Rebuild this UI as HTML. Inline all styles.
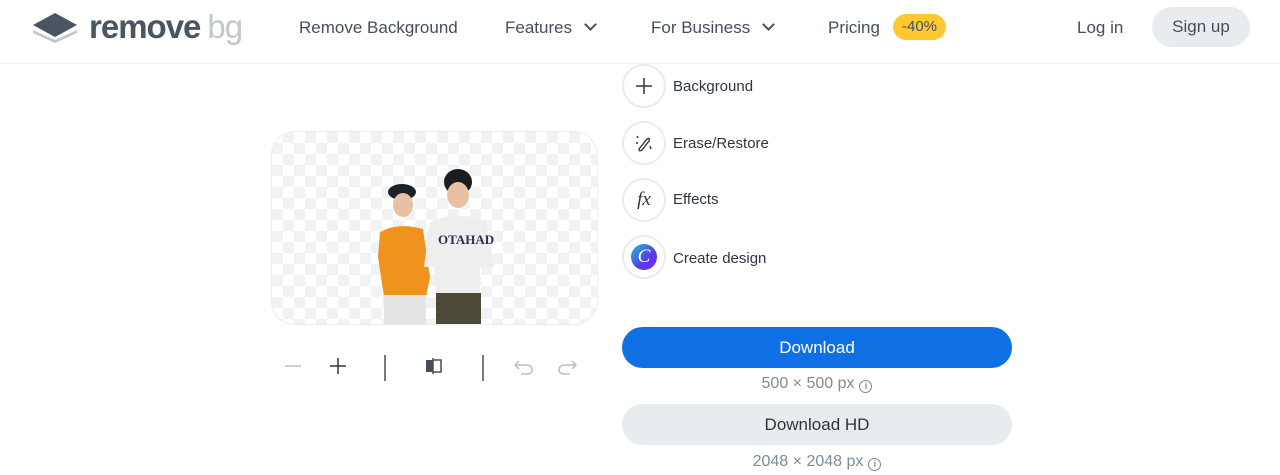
<!DOCTYPE html>
<html><head><meta charset="utf-8"><style>
*{box-sizing:border-box;margin:0;padding:0}
body{width:1280px;height:475px;overflow:hidden;background:#fff;font-family:"Liberation Sans",sans-serif;color:#454f5b;position:relative}
.nav{position:absolute;top:0;left:0;width:1280px;height:64px;border-bottom:1px solid #f0f1f3}
.t{position:absolute;font-size:17px;color:#454f5b;white-space:nowrap}
.chev{display:inline-block;width:9px;height:9px;border-right:2px solid #454f5b;border-bottom:2px solid #454f5b;transform:rotate(45deg);margin-left:14px;position:relative;top:-4px}
.badge{position:absolute;left:893px;top:14px;width:53px;height:26px;border-radius:13px;background:#ffc833;font-size:15px;color:#454f5b;text-align:center;line-height:26px}
.signup{position:absolute;left:1152px;top:7px;width:98px;height:40px;border-radius:20px;background:#e9ecef;font-size:17px;text-align:center;line-height:40px;color:#454f5b}
.img{position:absolute;left:271px;top:131px;width:327px;height:194px;border-radius:24px;border:1px solid #eceef0;overflow:hidden;
background-color:#fff;background-image:linear-gradient(45deg,#f1f2f4 25%,transparent 25%,transparent 75%,#f1f2f4 75%),linear-gradient(45deg,#f1f2f4 25%,transparent 25%,transparent 75%,#f1f2f4 75%);background-size:22px 22px;background-position:0 0,11px 11px}
.circ{position:absolute;left:622px;width:44px;height:44px;border-radius:50%;border:2px solid #e9ecef;display:flex;align-items:center;justify-content:center}
.lab{position:absolute;left:673px;font-size:15px;color:#2d3640}
.btn{position:absolute;left:622px;width:390px;height:41px;border-radius:21px;text-align:center;line-height:41px;font-size:17px}
.sub{position:absolute;width:390px;left:622px;text-align:center;font-size:16px;color:#7d8b99}
.i{display:inline-block;width:13px;height:13px;border:1.3px solid #7d8b99;border-radius:50%;font-size:9px;line-height:11px;text-align:center;vertical-align:-1px;margin-left:5px;font-weight:bold}
</style></head><body>
<div class="nav">
<svg style="position:absolute;left:32px;top:12px" width="46" height="32" viewBox="0 0 46 32"><path d="M1 18 L23 28 L45 18 L45 21 L23 31 L1 21Z" fill="#c2c7cc"/><path d="M23 1 L45 13 L23 25 L1 13Z" fill="#4a5562"/></svg>
<div class="t" style="left:89px;top:8px;font-size:33px;font-weight:bold;color:#4a5562;letter-spacing:-1px">remove<span style="color:#c2c7cc;font-weight:normal;margin-left:7px">bg</span></div>
<div class="t" style="left:299px;top:18px">Remove Background</div>
<div class="t" style="left:505px;top:18px">Features<span class="chev"></span></div>
<div class="t" style="left:651px;top:18px">For Business<span class="chev"></span></div>
<div class="t" style="left:828px;top:18px">Pricing</div>
<div class="badge">-40%</div>
<div class="t" style="left:1077px;top:18px">Log in</div>
<div class="signup">Sign up</div>
</div>
<div class="img">
<svg style="position:absolute;left:106px;top:35px" width="130" height="160" viewBox="0 0 130 160">
<ellipse cx="24" cy="25" rx="14" ry="8" fill="#1c2128"/><ellipse cx="25" cy="38" rx="10" ry="12" fill="#e8c1a4"/>
<path d="M2 65 Q20 55 45 62 L52 110 L48 130 L6 130 L0 90Z" fill="#f0921e"/><rect x="6" y="128" width="42" height="32" fill="#e3e4e4"/>
<ellipse cx="80" cy="15" rx="14" ry="13" fill="#1a1d22"/><ellipse cx="80" cy="28" rx="11" ry="13" fill="#e8c1a4"/>
<path d="M52 55 Q80 42 108 55 L116 100 L102 100 L102 128 L58 128 L56 100 L46 100Z" fill="#efeeee"/>
<text x="60" y="77" font-size="13" font-weight="bold" fill="#2a3050" font-family="Liberation Serif">OTAHAD</text>
<rect x="58" y="126" width="45" height="34" fill="#4e4a3a"/>
</svg>
</div>
<svg style="position:absolute;left:283px;top:355px" width="300" height="28">
<path d="M2 11 H18" stroke="#b8bfc6" stroke-width="1.5"/><path d="M47 11 H63 M55 3 V19" stroke="#2d3640" stroke-width="1.5"/>
<path d="M102 -5 V26" stroke="#454f5b" stroke-width="1.5"/><path d="M200 -5 V26" stroke="#454f5b" stroke-width="1.5"/>
<rect x="143" y="5" width="7" height="12" fill="#454f5b"/><path d="M150 5 H158 V17 H150 M150 3 V19" stroke="#454f5b" stroke-width="1.5" fill="none"/>
<path d="M236 6 L232 10 L236 14 M232 10 H243 Q249 10 249 15 Q249 19 243 19 H238" stroke="#b8bfc6" stroke-width="1.5" fill="none"/>
<path d="M289 6 L293 10 L289 14 M293 10 H282 Q276 10 276 15 Q276 19 282 19 H287" stroke="#b8bfc6" stroke-width="1.5" fill="none"/>
</svg>
<div class="circ" style="top:64px"><svg width="20" height="20"><path d="M10 2V18M2 10H18" stroke="#2d3640" stroke-width="1.5"/></svg></div>
<div class="lab" style="top:78px">Background</div>
<div class="circ" style="top:121px"><svg width="22" height="22"><path d="M6 17 L14 7 Q17 5 16 9 L9 18 Q6 20 6 17Z M4 4 L5 6 M3 11 H5 M17 14 L18 17" stroke="#2d3640" stroke-width="1.4" fill="none"/></svg></div>
<div class="lab" style="top:135px">Erase/Restore</div>
<div class="circ" style="top:178px"><span style="font-family:'Liberation Serif',serif;font-style:italic;font-size:19px;color:#2d3640">fx</span></div>
<div class="lab" style="top:191px">Effects</div>
<div class="circ" style="top:235px"><div style="width:26px;height:26px;border-radius:50%;background:linear-gradient(135deg,#19c3d4,#5a39e8 60%,#7d2ae8);color:#fff;font-family:'Liberation Serif',serif;font-style:italic;font-size:19px;text-align:center;line-height:26px">C</div></div>
<div class="lab" style="top:250px">Create design</div>
<div class="btn" style="top:327px;background:#0f70e6;color:#fff">Download</div>
<div class="sub" style="top:375px">500 × 500 px<span class="i">i</span></div>
<div class="btn" style="top:404px;background:#e9ecef;color:#2d3640">Download HD</div>
<div class="sub" style="top:453px">2048 × 2048 px<span class="i">i</span></div>
</body></html>
